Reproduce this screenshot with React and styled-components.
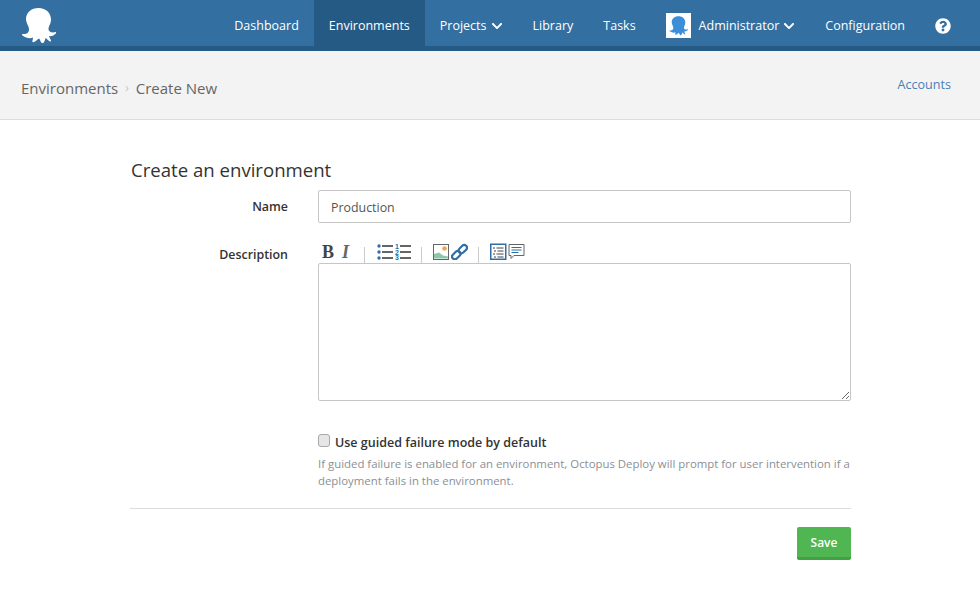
import React from 'react'
import styled, { createGlobalStyle } from 'styled-components'
import { FaChevronDown, FaQuestionCircle } from 'react-icons/fa'

const Global = createGlobalStyle`
  html, body { margin: 0; padding: 0; background: #fff; }
  body { font-family: "Open Sans", "Liberation Sans", sans-serif; font-size: 13px; color: #333; }
  * { box-sizing: border-box; }
`

const Header = styled.header`
  height: 51px;
  background: #336fa0;
  border-bottom: 5px solid #255a84;
  display: flex;
  justify-content: space-between;
  padding-left: 21px;
`
const Logo = styled.svg`
  width: 35px;
  height: 36px;
  margin-top: 7px;
`
const Nav = styled.nav`
  display: flex;
  height: 46px;
  padding-right: 14px;
`
const NavItem = styled.a`
  display: flex;
  align-items: center;
  gap: 4px;
  padding: 5px 15px 0;
  height: 46px;
  color: #fff;
  font-size: 12.5px;
  background: ${p => (p.$active ? '#255a84' : 'transparent')};
`
const Avatar = styled.svg`
  width: 25px;
  height: 25px;
  background: #fff;
  margin-right: 4px;
`
const SubHeader = styled.div`
  height: 69px;
  background: #f3f3f3;
  border-bottom: 1px solid #dcdcdc;
  padding: 0 29px 0 21px;
  display: flex;
  justify-content: space-between;
`
const Crumbs = styled.div`
  display: flex;
  align-items: center;
  height: 73px;
  font-size: 15px;
  color: #666;
`
const CrumbArrow = styled.span`
  color: #c4c4c4;
  font-size: 12px;
  margin: 0 7px;
`
const SubLink = styled.a`
  color: #4a7fb5;
  font-size: 12.6px;
  margin-top: 25px;
`
const Content = styled.main`
  width: 721px;
  margin-left: 130px;
  padding-top: 38px;
`
const Title = styled.h2`
  margin: 0 0 0 1px;
  font-size: 18.6px;
  font-weight: 400;
  line-height: 24px;
  color: #333;
`
const Row = styled.div`
  display: grid;
  grid-template-columns: 158px 533px;
  column-gap: 30px;
  margin-top: ${p => p.$top || 0}px;
`
const Label = styled.label`
  text-align: right;
  font-size: 12.4px;
  font-weight: 600;
  line-height: 18px;
  color: #333;
  padding-top: ${p => p.$top || 0}px;
`
const Input = styled.input`
  display: block;
  width: 100%;
  height: 33px;
  border: 1px solid #c6c6c6;
  border-radius: 2px;
  padding: 1px 12px 0;
  font: 12.4px "Open Sans", sans-serif;
  color: #555;
  outline: none;
`
const Toolbar = styled.div`
  height: 20px;
  display: flex;
  align-items: flex-start;
  padding-left: 4px;
`
const Bold = styled.span`
  font: bold 18px/18px "Liberation Serif", serif;
  color: #444;
  width: 20px;
`
const Italic = styled.span`
  font: italic bold 18px/18px "Liberation Serif", serif;
  color: #666;
  width: 11px;
`
const Sep = styled.span`
  width: 1px;
  height: 16px;
  margin: 4px ${p => p.$right || 11}px 0 ${p => p.$left || 11}px;
  background: #ccc;
`
const ToolIcon = styled.svg`
  width: 17px;
  height: 17px;
  margin-right: ${p => p.$gap ?? 1}px;
  flex-shrink: 0;
`
const Area = styled.textarea`
  display: block;
  width: 100%;
  height: 138px;
  border: 1px solid #c6c6c6;
  border-radius: 2px;
  outline: none;
  padding: 6px 12px;
`
const CheckLine = styled.label`
  display: flex;
  align-items: center;
  height: 18px;
  font-size: 12.5px;
  font-weight: 600;
  color: #333;
`
const Check = styled.input`
  appearance: none;
  width: 12px;
  height: 13px;
  margin: 0 5px 3px 0;
  background: #e6e6e6;
  border: 1px solid #a8a8a8;
  border-radius: 3px;
`
const Help = styled.p`
  margin: 4px 0 0;
  font-size: 11.4px;
  line-height: 17px;
  color: #8b8f94;
`
const Divider = styled.hr`
  border: 0;
  border-top: 1px solid #dcdcdc;
  margin: 19px 0 18px;
`
const Actions = styled.div`
  display: flex;
  justify-content: flex-end;
`
const SaveBtn = styled.button`
  width: 54px;
  height: 33px;
  background: #50b651;
  border: 0;
  border-bottom: 3px solid #44a045;
  border-radius: 2px;
  color: #fff;
  font: 600 12px "Open Sans", sans-serif;
`

const octopus =
  'M17.5 1C25 1 30 6 30 12.5C30 17 27.5 19 27.5 22C27.5 25 31 26 34.5 25C35.3 24.8 35.4 25.8 34.8 26.5C33 28.5 30.5 29.5 28 29C28.5 31 29.5 32 30 33.5C30.2 34.5 29.3 34.8 28.5 34.3C26.5 33 25.5 31.5 24.5 31C24 33 23.5 34.5 22.5 35.7C21.8 36.4 20.8 36.2 20.3 35.5C19.3 34 19 32.5 18 31.5C16.5 32.5 15 34 13 35C12 35.5 11 35 11.3 34C11.8 32.5 12 31.5 12 30.5C9 32 5 31 1.5 28.5C0.5 27.8 0.8 26.8 2 27C5 27.5 8 26 8 22.5C8 19 5.5 17 5 12.5C4.7 6 10 1 17.5 1Z'

export default function App() {
  return (
    <>
      <Global />
      <Header>
        <Logo viewBox="0 0 35 36"><path d={octopus} fill="#fff" /></Logo>
        <Nav>
          <NavItem>Dashboard</NavItem>
          <NavItem $active>Environments</NavItem>
          <NavItem>Projects <FaChevronDown size={12} /></NavItem>
          <NavItem>Library</NavItem>
          <NavItem>Tasks</NavItem>
          <NavItem>
            <Avatar viewBox="-5 -5 45 46"><path d={octopus} fill="#3b8fd9" /></Avatar>
            Administrator <FaChevronDown size={12} />
          </NavItem>
          <NavItem>Configuration</NavItem>
          <NavItem><FaQuestionCircle size={16} /></NavItem>
        </Nav>
      </Header>
      <SubHeader>
        <Crumbs>Environments<CrumbArrow>›</CrumbArrow>Create New</Crumbs>
        <SubLink>Accounts</SubLink>
      </SubHeader>
      <Content>
        <Title>Create an environment</Title>
        <Row $top={8}>
          <Label $top={8}>Name</Label>
          <Input defaultValue="Production" />
        </Row>
        <Row $top={20}>
          <Label $top={3}>Description</Label>
          <div>
            <Toolbar>
              <Bold>B</Bold>
              <Italic>I</Italic>
              <Sep $right={12} />
              <ToolIcon viewBox="0 0 17 17">
                <g fill="#2f6ea5"><circle cx="2" cy="3" r="1.7" /><circle cx="2" cy="9" r="1.7" /><circle cx="2" cy="15" r="1.7" /></g>
                <path d="M5 3h11M5 9h11M5 15h11" stroke="#333" strokeWidth="1.3" />
              </ToolIcon>
              <ToolIcon viewBox="0 0 17 17" $gap={0}>
                <g fill="#2f6ea5" fontFamily="Liberation Sans" fontSize="7" fontWeight="700">
                  <text x="0" y="5.500">1</text><text x="0" y="11.500">2</text><text x="0" y="17">3</text>
                </g>
                <path d="M5 3h11M5 9h11M5 15h11" stroke="#333" strokeWidth="1.3" />
              </ToolIcon>
              <Sep $left={9} />
              <ToolIcon viewBox="0 0 17 17">
                <rect x=".5" y="1.500" width="15" height="15" fill="#fff" stroke="#666" />
                <circle cx="11.500" cy="5.500" r="2.300" fill="#e8a95a" />
                <path d="M1 11l5-1.500 4 3 5 1v2h-14z" fill="#8cc7ab" />
              </ToolIcon>
              <ToolIcon viewBox="0 0 17 17" $gap={0}>
                <g fill="none" stroke="#2f6ea5" strokeWidth="2.200">
                  <rect x="0.500" y="9.500" width="9.500" height="5.500" rx="2.700" transform="rotate(-45 5.200 12.200)" />
                  <rect x="7" y="3.500" width="9.500" height="5.500" rx="2.700" transform="rotate(-45 11.700 6.200)" />
                </g>
              </ToolIcon>
              <Sep $left={10} />
              <ToolIcon viewBox="0 0 17 17">
                <rect x=".75" y="1.250" width="15" height="15" fill="#fff" stroke="#2f6ea5" strokeWidth="1.500" />
                <path d="M3 5h2M6.500 5h7M4 8h2M7.500 8h6M3 11h2M6.500 11h7M4 14h2M7.500 14h6" stroke="#444" strokeWidth="1" />
              </ToolIcon>
              <ToolIcon viewBox="0 0 17 17" $gap={0}>
                <path d="M1 1.500h15v11h-10l-3 3v-3h-2z" fill="#fff" stroke="#666" />
                <path d="M3.500 4.500h10M3.500 7h10M3.500 9.500h7" stroke="#2f6ea5" strokeWidth="1" />
              </ToolIcon>
            </Toolbar>
            <Area />
          </div>
        </Row>
        <Row $top={32}>
          <span />
          <div>
            <CheckLine><Check type="checkbox" />Use guided failure mode by default</CheckLine>
            <Help>If guided failure is enabled for an environment, Octopus Deploy will prompt for user intervention if a deployment fails in the environment.</Help>
          </div>
        </Row>
        <Divider />
        <Actions><SaveBtn>Save</SaveBtn></Actions>
      </Content>
    </>
  )
}
